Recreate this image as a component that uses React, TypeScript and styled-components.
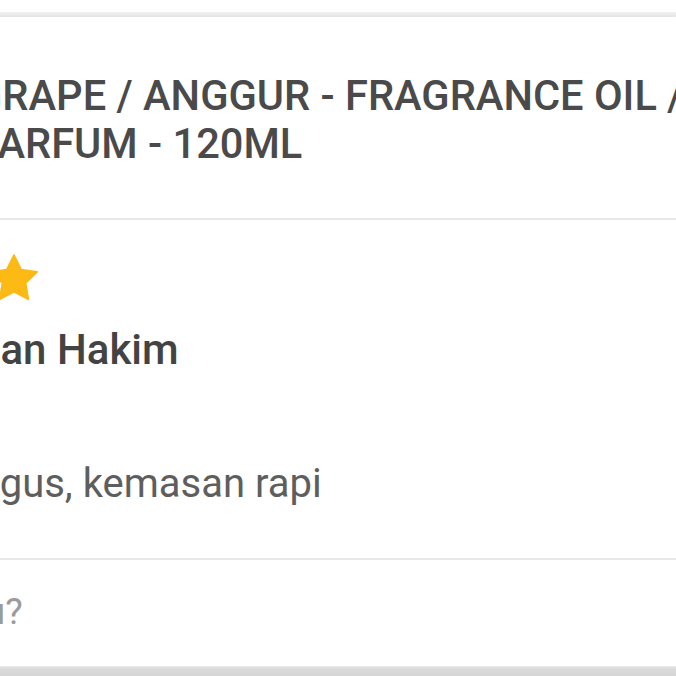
import React from "react";
import styled, { createGlobalStyle } from "styled-components";

const GlobalStyle = createGlobalStyle`
  html, body {
    margin: 0;
    padding: 0;
    background: #ffffff;
    overflow: hidden;
  }
  body {
    font-family: Roboto, "Noto Sans", "Liberation Sans", sans-serif;
    -webkit-font-smoothing: antialiased;
  }
`;

const Page = styled.div`
  width: 676px;
  height: 676px;
  overflow: hidden;
  display: flex;
  flex-direction: column;
  padding-top: 12px;
  box-sizing: border-box;
  background: #ffffff;
`;

const TopShade = styled.div`
  height: 5px;
  flex: none;
  background: linear-gradient(#f1f1f1, #e4e4e4);
`;

const Card = styled.div`
  flex: none;
  display: flex;
  flex-direction: column;
  background: #ffffff;
  overflow: hidden;
`;

const BottomShade = styled.div`
  flex: 1;
  background: linear-gradient(#e9e9e9 0, #dadada 3px, #d6d6d6 100%);
`;

const Section = styled.section<{ $pt: number; $pb: number; $divider?: boolean }>`
  display: flex;
  flex-direction: column;
  padding-top: ${(p) => p.$pt}px;
  padding-bottom: ${(p) => p.$pb}px;
  border-bottom: ${(p) => (p.$divider ? "2px solid #e8e8e8" : "none")};
`;

const Title = styled.h1<{ $lead: number }>`
  margin: 0 0 0 ${(p) => p.$lead}px;
  width: 720px;
  font-size: 41.6px;
  line-height: 48px;
  font-weight: 500;
  color: #4a4a4a;
  letter-spacing: 0;
`;

const StarRow = styled.div<{ $lead: number }>`
  display: flex;
  gap: 4px;
  margin-left: ${(p) => p.$lead}px;
  height: 56px;
`;

const StarIcon = styled.svg`
  width: 56px;
  height: 56px;
  flex: none;
  display: block;
`;

const Name = styled.div<{ $lead: number }>`
  margin: 20px 0 0 ${(p) => p.$lead}px;
  font-size: 42px;
  line-height: 48px;
  font-weight: 500;
  color: #434343;
  white-space: nowrap;
`;

const Comment = styled.p<{ $lead: number }>`
  margin: 86px 0 0 ${(p) => p.$lead}px;
  font-size: 40px;
  line-height: 48px;
  font-weight: 400;
  color: #5e5e5e;
  white-space: nowrap;
`;

const Helpful = styled.div<{ $lead: number }>`
  margin-left: ${(p) => p.$lead}px;
  font-size: 37px;
  line-height: 44px;
  font-weight: 400;
  color: #9b9b9b;
  white-space: nowrap;
`;

const Star = () => (
  <StarIcon viewBox="0 0 24 24">
    <path
      d="M12 2.2l3.05 6.2 6.85 1-4.95 4.83 1.17 6.82L12 17.83l-6.12 3.22 1.17-6.82L2.1 9.4l6.85-1L12 2.2z"
      fill="#fdb914"
      stroke="#fdb914"
      strokeWidth="0.8"
      strokeLinejoin="round"
    />
  </StarIcon>
);

export default function App() {
  return (
    <>
      <GlobalStyle />
      <Page>
        <TopShade />
        <Card>
          <Section $pt={55} $pb={50} $divider>
            <Title $lead={-26}>GRAPE / ANGGUR - FRAGRANCE OIL / PARFUM - 120ML</Title>
          </Section>
          <Section $pt={30} $pb={50} $divider>
            <StarRow $lead={-254}>
              {[0, 1, 2, 3, 4].map((i) => (
                <Star key={i} />
              ))}
            </StarRow>
            <Name $lead={-48}>Iman Hakim</Name>
            <Comment $lead={-47}>Bagus, kemasan rapi</Comment>
          </Section>
          <Section $pt={30} $pb={32}>
            <Helpful $lead={-173}>Membantu?</Helpful>
          </Section>
        </Card>
        <BottomShade />
      </Page>
    </>
  );
}
